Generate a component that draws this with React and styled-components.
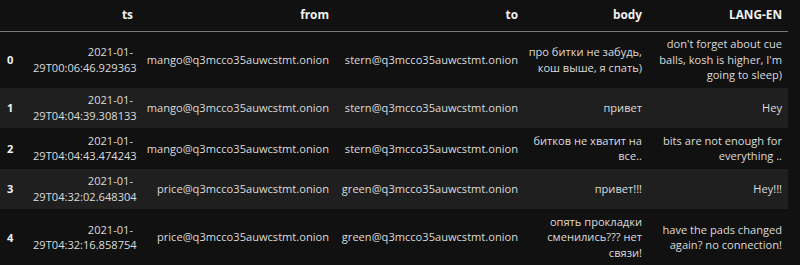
import React from 'react';
import styled, { createGlobalStyle } from 'styled-components';

const GlobalStyle = createGlobalStyle`
  html, body {
    margin: 0;
    padding: 0;
    background: #111111;
  }
  body {
    width: 800px;
    height: 265px;
    overflow: hidden;
  }
`;

const Frame = styled.div`
  width: 800px;
  height: 265px;
  background: #111111;
  font-family: 'Open Sans', 'Noto Sans', sans-serif;
  font-size: 11.1px;
  color: #dcdcdc;
`;

const Table = styled.table`
  width: 788px;
  border-collapse: collapse;
  border-spacing: 0;
  table-layout: fixed;
`;

const HeadRow = styled.tr`
  height: 31px;
  border-bottom: 1px solid #7a7a7a;
`;

const Th = styled.th`
  font-weight: 700;
  font-size: 11.8px;
  color: #f2f2f2;
  text-align: ${({ $left }) => ($left ? 'left' : 'right')};
  padding: 0 6px 2px 2px;
  vertical-align: middle;
  white-space: nowrap;
`;

const Row = styled.tr`
  background: ${({ $striped }) => ($striped ? '#1f1f1f' : 'transparent')};
`;

const IndexCell = styled.th`
  font-weight: 700;
  color: #f2f2f2;
  text-align: left;
  padding: 0 0 0 7px;
  vertical-align: middle;
`;

const Td = styled.td`
  text-align: right;
  vertical-align: middle;
  padding: 4.75px 6px 4.75px 2px;
  line-height: 15.5px;
  white-space: nowrap;
`;

const Line = styled.span`
  display: block;
`;

const columns = [
  { key: 'ts', width: 108 },
  { key: 'from', width: 196 },
  { key: 'to', width: 189 },
  { key: 'body', width: 124 },
  { key: 'LANG-EN', width: 140 },
];

const rows = [
  {
    ts: ['2021-01-', '29T00:06:46.929363'],
    from: ['mango@q3mcco35auwcstmt.onion'],
    to: ['stern@q3mcco35auwcstmt.onion'],
    body: ['про битки не забудь,', 'кош выше, я спать)'],
    'LANG-EN': ["don't forget about cue", "balls, kosh is higher, I'm", 'going to sleep)'],
  },
  {
    ts: ['2021-01-', '29T04:04:39.308133'],
    from: ['mango@q3mcco35auwcstmt.onion'],
    to: ['stern@q3mcco35auwcstmt.onion'],
    body: ['привет'],
    'LANG-EN': ['Hey'],
  },
  {
    ts: ['2021-01-', '29T04:04:43.474243'],
    from: ['mango@q3mcco35auwcstmt.onion'],
    to: ['stern@q3mcco35auwcstmt.onion'],
    body: ['битков не хватит на', 'все..'],
    'LANG-EN': ['bits are not enough for', 'everything ..'],
  },
  {
    ts: ['2021-01-', '29T04:32:02.648304'],
    from: ['price@q3mcco35auwcstmt.onion'],
    to: ['green@q3mcco35auwcstmt.onion'],
    body: ['привет!!!'],
    'LANG-EN': ['Hey!!!'],
  },
  {
    ts: ['2021-01-', '29T04:32:16.858754'],
    from: ['price@q3mcco35auwcstmt.onion'],
    to: ['green@q3mcco35auwcstmt.onion'],
    body: ['опять прокладки', 'сменились??? нет', 'связи!'],
    'LANG-EN': ['have the pads changed', 'again? no connection!'],
  },
];

const App = () => {
  return (
    <Frame>
      <GlobalStyle />
      <Table>
        <colgroup>
          <col style={{ width: 31 }} />
          {columns.map((c) => (
            <col key={c.key} style={{ width: c.width }} />
          ))}
        </colgroup>
        <thead>
          <HeadRow>
            <Th $left />
            {columns.map((c) => (
              <Th key={c.key}>{c.key}</Th>
            ))}
          </HeadRow>
        </thead>
        <tbody>
          {rows.map((row, i) => (
            <Row key={i} $striped={i % 2 === 1}>
              <IndexCell>{i}</IndexCell>
              {columns.map((c) => (
                <Td key={c.key}>
                  {row[c.key].map((line, j) => (
                    <Line key={j}>{line}</Line>
                  ))}
                </Td>
              ))}
            </Row>
          ))}
        </tbody>
      </Table>
    </Frame>
  );
};

export default App;
